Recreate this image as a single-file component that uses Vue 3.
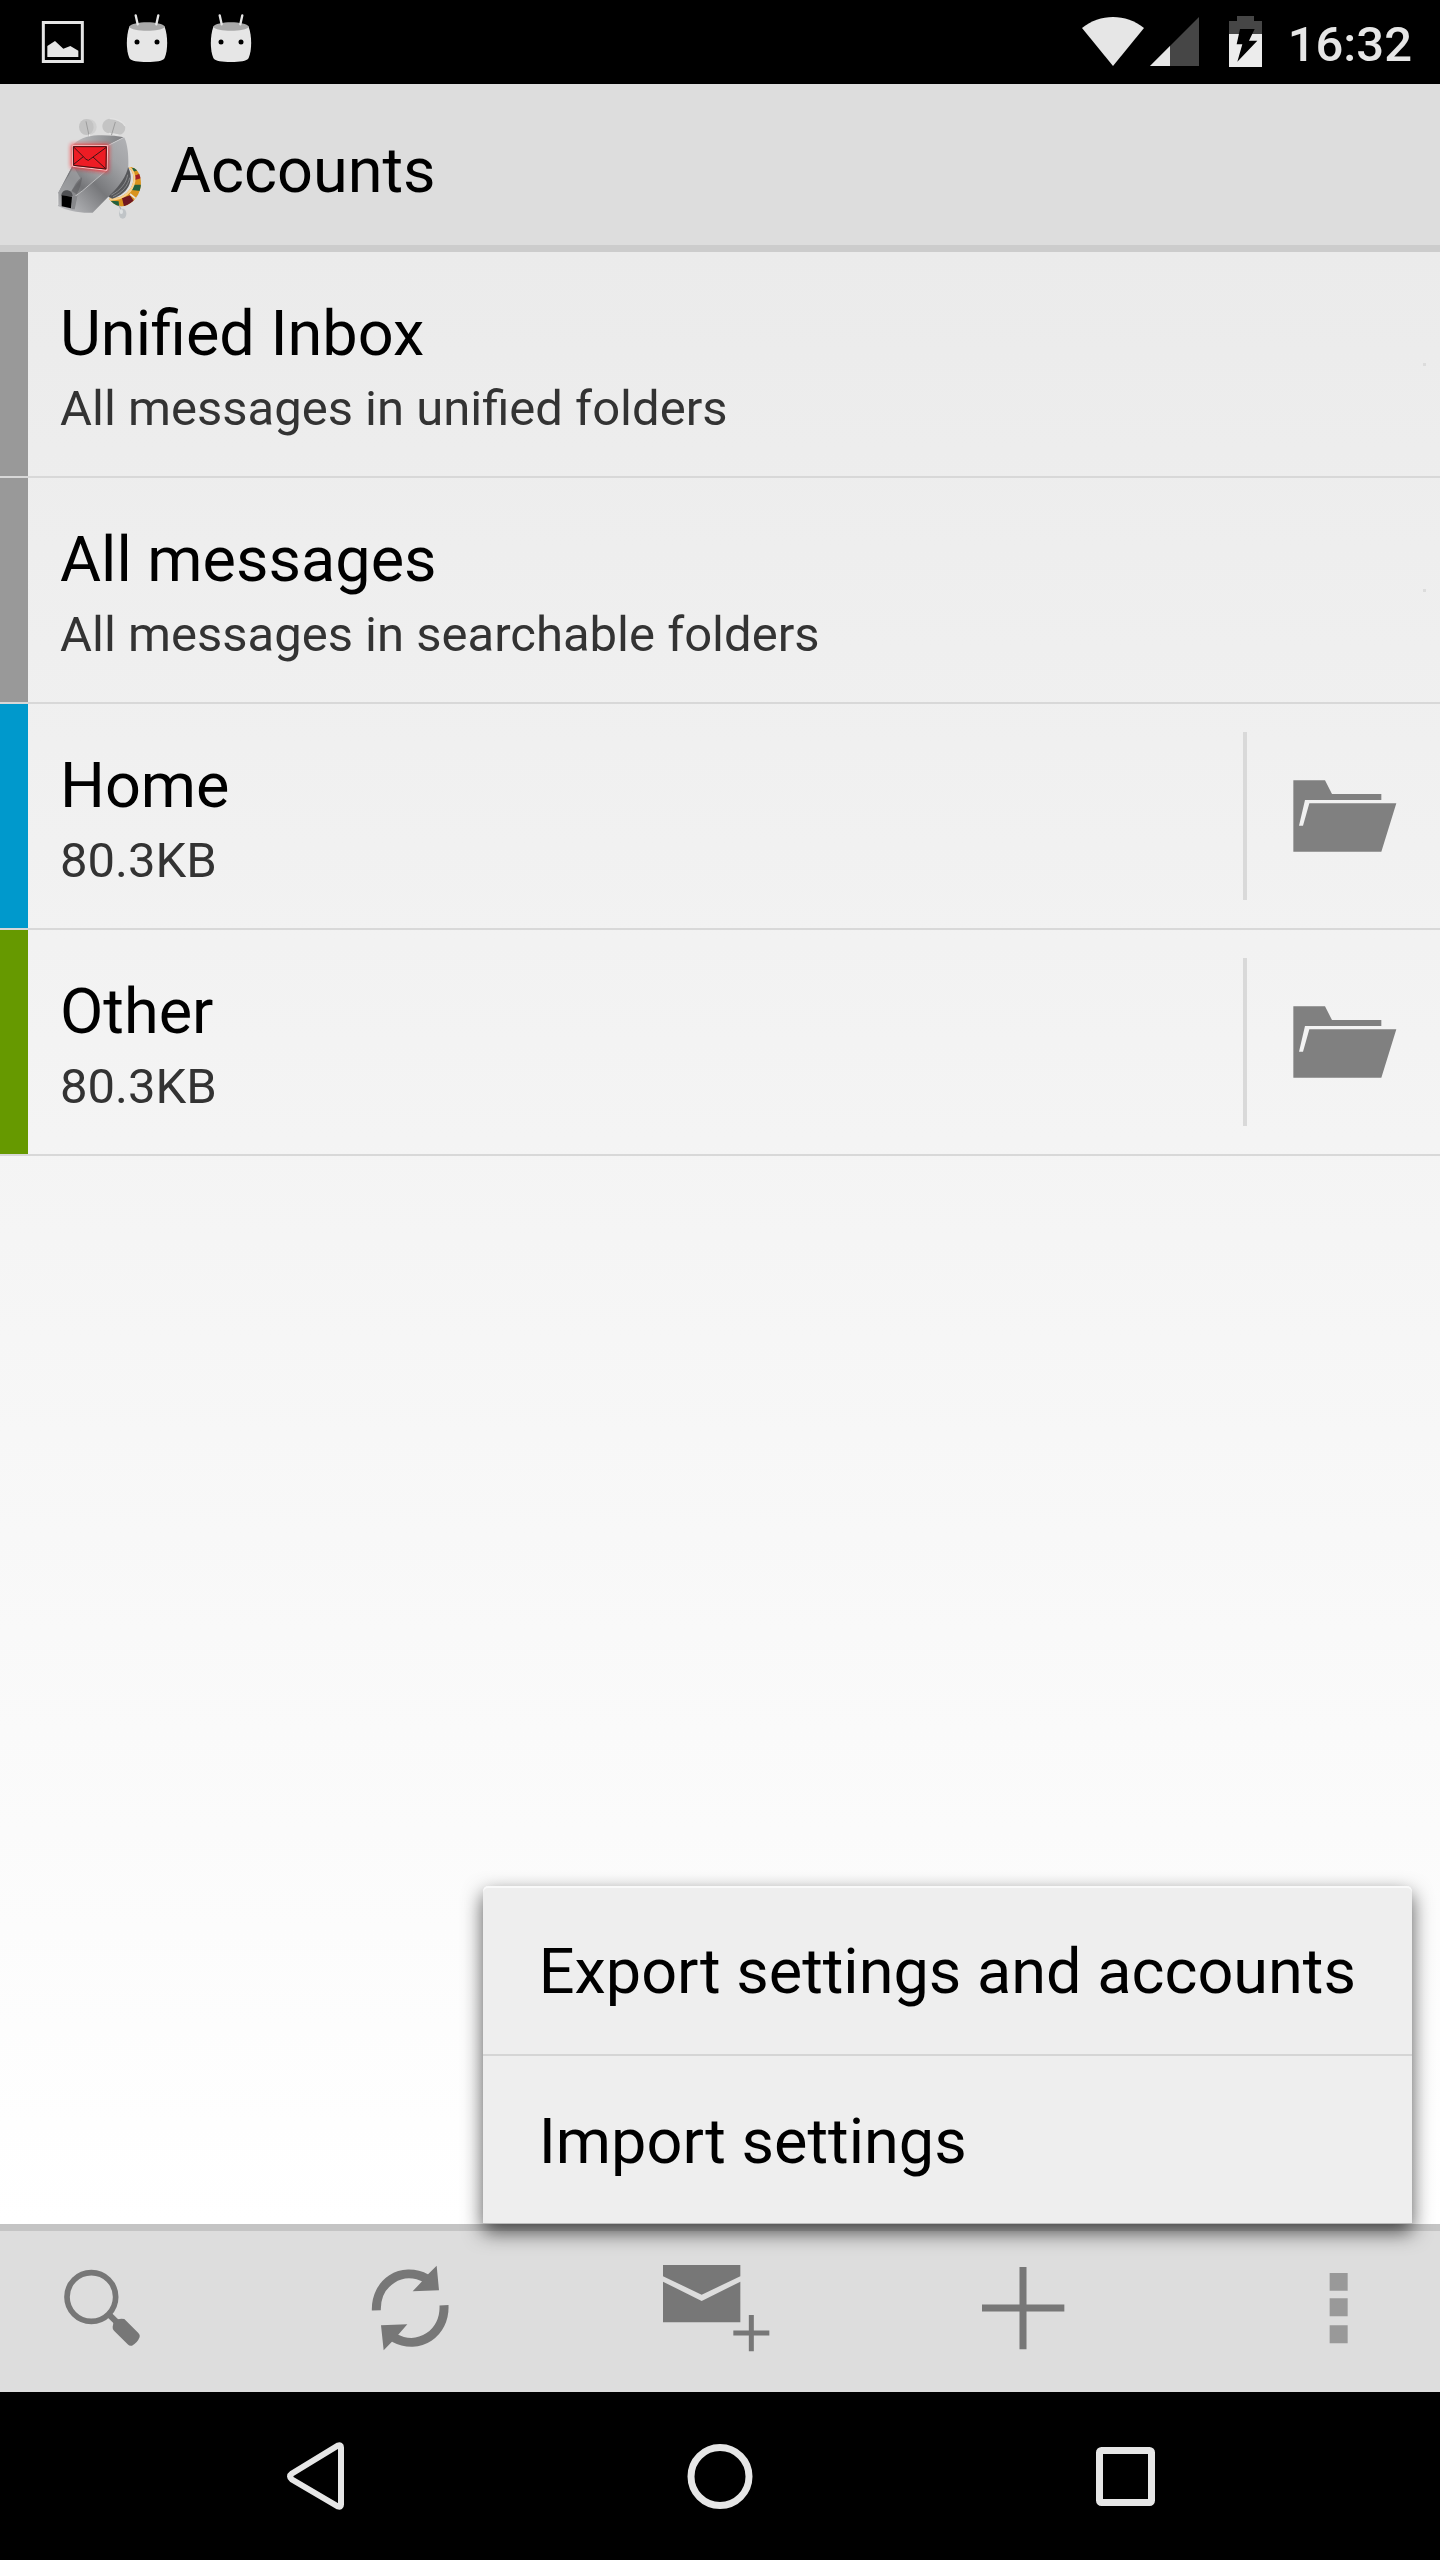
<script setup>
const accounts = [
  { name: 'Unified Inbox', detail: 'All messages in unified folders', tone: 'neutral', folders: false },
  { name: 'All messages', detail: 'All messages in searchable folders', tone: 'neutral', folders: false },
  { name: 'Home', detail: '80.3KB', tone: 'blue', folders: true },
  { name: 'Other', detail: '80.3KB', tone: 'green', folders: true },
]

const menuItems = ['Export settings and accounts', 'Import settings']
</script>

<template>
  <div class="screen">
    <div class="status">
      <div class="notifications">
        <svg class="notice" viewBox="63 0 252 252" aria-hidden="true">
          <rect x="130" y="67.5" width="117" height="117" fill="none" stroke="#e6e6e6" stroke-width="9" />
          <path d="M142 171V138L165 123L190 146L211 138L235 152V171Z" fill="#e6e6e6" />
        </svg>
        <svg v-for="n in 2" :key="n" class="notice" viewBox="315 0 252 252" aria-hidden="true">
          <path d="M388 80C378 108 378 150 388 174C394 184 414 186 441 186C468 186 488 184 494 174C504 150 504 108 494 80Z" fill="#e6e6e6" />
          <path d="M387 80C397 62 485 62 495 80C485 96 397 96 387 80Z" fill="#a9a9a9" />
          <path d="M407 46L413 73M475 46L469 73" stroke="#e6e6e6" stroke-width="7" stroke-linecap="round" />
          <circle cx="411" cy="126" r="7.5" fill="#000" />
          <circle cx="471" cy="126" r="7.5" fill="#000" />
        </svg>
      </div>
      <svg class="wifi" viewBox="66 0 186 252" aria-hidden="true">
        <path d="M66 84C120 40 198 40 252 84L159 198Z" fill="#e6e6e6" />
      </svg>
      <svg class="signal" viewBox="270 0 147 252" aria-hidden="true">
        <path d="M417 51V198H270Z" fill="#464646" />
        <path d="M330 138V198H270Z" fill="#e6e6e6" />
      </svg>
      <svg class="battery" viewBox="507 0 99 252" aria-hidden="true">
        <path d="M507 63H531V48H582V63H606V102H507Z" fill="#464646" />
        <path d="M507 102H606V201H507Z" fill="#ececec" />
        <path d="M540 87H584L567 122H592L532 185L547 133H530Z" fill="#000" />
      </svg>
      <time class="clock">16:32</time>
    </div>

    <header class="header">
      <svg class="logo" viewBox="12 43 336 336" aria-hidden="true">
        <defs>
          <linearGradient id="dogSide" x1="0" y1="1" x2="1" y2="0">
            <stop offset="0" stop-color="#c4c5c8" />
            <stop offset="0.2" stop-color="#a3a4a7" />
            <stop offset="0.45" stop-color="#77787b" />
            <stop offset="0.75" stop-color="#a2a3a6" />
            <stop offset="1" stop-color="#b2b3b6" />
          </linearGradient>
          <linearGradient id="dogSnout" x1="0" y1="1" x2="1" y2="0">
            <stop offset="0" stop-color="#b7b8ba" />
            <stop offset="0.5" stop-color="#737477" />
            <stop offset="1" stop-color="#b4b5b8" />
          </linearGradient>
          <linearGradient id="dogTop" x1="0" y1="0" x2="1" y2="0">
            <stop offset="0" stop-color="#c0c1c3" />
            <stop offset="1" stop-color="#7d7e81" />
          </linearGradient>
          <filter id="redGlow" x="-30%" y="-40%" width="160%" height="180%">
            <feGaussianBlur stdDeviation="7" />
          </filter>
          <clipPath id="collar">
            <path d="M268 198C294 200 306 226 302 258C297 292 266 320 240 317C226 314 214 305 207 294L222 292C250 292 276 268 280 240C282 222 276 208 266 202Z" />
          </clipPath>
        </defs>
        <g clip-path="url(#collar)">
          <path d="M200 190H310V325H200Z" fill="#d9931c" />
          <path d="M282 226L302 218L305 232L284 238Z" fill="#a21e24" />
          <path d="M274 204L288 198L296 208L280 213Z" fill="#23613f" />
          <path d="M280 252H306L302 271L274 268Z" fill="#23613f" />
          <path d="M246 292L270 284L282 302L252 318Z" fill="#701720" />
          <path d="M212 300L236 302L238 322L214 316Z" fill="#23613f" />
          <path d="M270 280L290 296" stroke="#e9e5d8" stroke-width="5" />
          <path d="M266 200C278 208 284 222 282 242C278 270 252 297 208 296" fill="none" stroke="#f8d08c" stroke-width="8" />
        </g>
        <path d="M264 198C282 232 272 276 217 294L205 288L250 190Z" fill="#56575a" />
        <path d="M269 231C264 256 246 276 219 288M263 222C259 248 241 269 214 283" fill="none" stroke="#a2a3a5" stroke-width="2" />
        <path d="M237 315L246 331" stroke="#aeb2b4" stroke-width="4" />
        <ellipse cx="248" cy="339" rx="11" ry="15" fill="#c0c4c7" />
        <ellipse cx="244" cy="333" rx="5" ry="7" fill="#dfe2e3" />
        <ellipse cx="148" cy="79" rx="22" ry="23" fill="#d0d0d0" />
        <ellipse cx="139" cy="79" rx="22" ry="24" fill="#c3c3c3" />
        <path d="M205 55C217 51 249 61 255 76C259 92 246 105 234 101L204 97C184 93 179 63 205 55Z" fill="#c4c4c4" />
        <path d="M209 54C225 53 250 63 255 76M207 98L235 103" fill="none" stroke="#e3e3e3" stroke-width="4" />
        <path d="M138 62L148 109M226 64L211 115" stroke="#9d9d9d" stroke-width="3" />
        <path d="M148 101L149 113M214 104L210 116" stroke="#f0f0f0" stroke-width="4" />
        <path d="M97 135C112 117 140 105 174 104C205 103 232 106 252 110L203 135Z" fill="url(#dogTop)" />
        <path d="M252 110C259 119 265 149 265 180V196C260 226 238 256 213 280L158 336C120 338 82 331 54 316L54 278L97 196L203 135Z" fill="url(#dogSide)" />
        <path d="M97 197L200 207L112 284L104 326L54 316V278Z" fill="url(#dogSnout)" />
        <path d="M101 198L123 236L94 271L66 282L54 278Z" fill="#a1a2a5" opacity="0.7" />
        <path d="M126 230C125 246 120 264 110 281L95 271C102 257 112 238 126 230Z" fill="#5d5e61" opacity="0.6" />
        <path d="M203 135L252 110M104 288L128 270L202 207" fill="none" stroke="#d9dadb" stroke-width="2" />
        <path d="M64 285C64 263 98 263 98 287Z" fill="#505154" />
        <path d="M65 284L96 288L93 323L65 317Z" fill="#000" />
        <path d="M98 286L112 286L104 326H94Z" fill="#87888b" />
        <path d="M54 278V313" stroke="#ededed" stroke-width="2" />
        <path d="M97 135H203L201 210L97 197Z" fill="#ff1a24" stroke="#ff1a24" stroke-width="8" opacity="0.85" filter="url(#redGlow)" />
        <path d="M98 135H203L201 209L98 197Z" fill="#ed1c24" stroke="#f7c9ca" stroke-width="3" />
        <path d="M100 138H199L198 205L101 194ZM101 139L138 176L145 179L151 175L199 140M101 191L130 168M159 169L197 204" fill="none" stroke="#3f1415" stroke-width="3" />
      </svg>
      <h1 class="title">Accounts</h1>
    </header>

    <main class="content">
      <ul class="accounts">
        <li v-for="account in accounts" :key="account.name" class="row">
          <span class="chip" :class="account.tone"></span>
          <button type="button" class="account">
            <span class="name">{{ account.name }}</span>
            <span class="detail">{{ account.detail }}</span>
          </button>
          <button v-if="account.folders" type="button" class="folders" :aria-label="`Folders of ${account.name}`">
            <svg viewBox="264 288 336 240" aria-hidden="true">
              <path d="M280 301H375L396 342H544V360H315L297 437H309L328 370H589L544 515H280Z" fill="#808080" />
            </svg>
          </button>
          <span v-else class="dot"></span>
        </li>
      </ul>
    </main>

    <footer class="toolbar">
      <button type="button" class="tool" aria-label="Search">
        <svg viewBox="138 156 336 336" aria-hidden="true">
          <circle cx="274" cy="291" r="73" fill="none" stroke="#777" stroke-width="17" />
          <path d="M325 342L352 368" stroke="#777" stroke-width="18" />
          <path d="M340 370Q337 366 344 361Q358 354 373 357L415 399Q421 405 419 411Q412 429 396 437Q389 439 383 433L342 392Q337 387 338 380Z" fill="#777" />
        </svg>
      </button>
      <button type="button" class="tool" aria-label="Refresh">
        <svg viewBox="1059 156 336 336" aria-hidden="true">
          <path d="M1129 331C1127 248 1204 196 1280 236M1332 316C1336 399 1258 453 1182 413" fill="none" stroke="#777" stroke-width="27" />
          <path d="M1310 197L1317 271L1238 274L1267 243L1282 225ZM1151 451L1143 376L1222 373L1194 405L1178 423Z" fill="#777" />
        </svg>
      </button>
      <button type="button" class="tool" aria-label="Compose">
        <svg viewBox="120 156 336 336" aria-hidden="true">
          <path d="M129 195H361V229L245 284L129 229ZM129 245L245 303L361 245V367H129Z" fill="#777" />
          <path d="M340 399H448M394 345V454" stroke="#777" stroke-width="15" />
        </svg>
      </button>
      <button type="button" class="tool" aria-label="Add account">
        <svg viewBox="1041 156 336 336" aria-hidden="true">
          <path d="M1086 324H1333M1209 201V448" stroke="#777" stroke-width="21" />
        </svg>
      </button>
      <button type="button" class="tool more" aria-label="More options" aria-haspopup="menu" aria-expanded="true">
        <svg viewBox="6 156 336 336" aria-hidden="true">
          <path d="M149 219H203V272H149ZM149 295H203V349H149ZM149 376H203V430H149Z" fill="#999" />
        </svg>
      </button>

      <div class="menu" role="menu">
        <button v-for="item in menuItems" :key="item" type="button" class="menu-item" role="menuitem">{{ item }}</button>
      </div>
    </footer>

    <nav class="navbar" aria-label="System">
      <button type="button" class="key" aria-label="Back">
        <svg viewBox="0 0 80 80" aria-hidden="true">
          <path d="M17 37.5L63 9.5Q66 8.500 66 11.500V68.500Q66 71.500 63 70.500L17 43.500Q13 40.500 17 37.500Z" fill="none" stroke="#e6e6e6" stroke-width="6" />
        </svg>
      </button>
      <button type="button" class="key" aria-label="Home">
        <svg viewBox="0 0 80 80" aria-hidden="true">
          <circle cx="40" cy="40.5" r="29" fill="none" stroke="#e6e6e6" stroke-width="7" />
        </svg>
      </button>
      <button type="button" class="key" aria-label="Overview">
        <svg viewBox="0 0 80 80" aria-hidden="true">
          <rect x="14.5" y="14.5" width="52" height="52" rx="2" fill="none" stroke="#e6e6e6" stroke-width="7" />
        </svg>
      </button>
    </nav>
  </div>
</template>

<style>
body {
  margin: 0;
  background: #000;
}
</style>

<style scoped>
.screen {
  display: flex;
  flex-direction: column;
  min-height: 100vh;
  font-family: Roboto, "Noto Sans", sans-serif;
  color: #000;
}

button {
  margin: 0;
  padding: 0;
  border: 0;
  background: none;
  font: inherit;
  color: inherit;
  text-align: left;
}

svg {
  display: block;
  flex: none;
}

.status {
  display: flex;
  align-items: center;
  height: 84px;
  padding: 0 28px 0 21px;
  background: #000;
}

.notifications {
  display: flex;
  flex: 1;
}

.notice {
  width: 84px;
  height: 84px;
}

.wifi {
  width: 62px;
  height: 84px;
  margin-right: 6px;
}

.signal {
  width: 49px;
  height: 84px;
  margin-right: 30px;
}

.battery {
  width: 33px;
  height: 84px;
  margin-right: 26px;
}

.clock {
  padding-top: 5px;
  font-size: 49px;
  font-weight: 500;
  line-height: 58px;
  color: #e6e6e6;
}

.header {
  display: flex;
  align-items: center;
  gap: 14px;
  box-sizing: border-box;
  height: 168px;
  padding: 12px 44px 0;
  border-bottom: 7px solid #ccc;
  background: #ddd;
}

.logo {
  width: 112px;
  height: 112px;
}

.title {
  margin: 0;
  font-size: 63px;
  font-weight: 400;
  line-height: 74px;
}

.content {
  flex: 1;
  background: linear-gradient(#ebebeb, #fff);
}

.accounts {
  margin: 0;
  padding: 0;
  list-style: none;
}

.row {
  display: flex;
  align-items: center;
  border-bottom: 2px solid #d8d8d8;
}

.chip {
  align-self: stretch;
  flex: none;
  width: 28px;
}

.neutral {
  background: #999;
}

.blue {
  background: #09c;
}

.green {
  background: #690;
}

.account {
  display: flex;
  flex: 1;
  flex-direction: column;
  padding: 42px 32px 32px;
}

.name {
  font-size: 63px;
  line-height: 80px;
}

.detail {
  font-size: 49px;
  line-height: 70px;
  color: #333;
}

.folders {
  display: flex;
  align-items: center;
  height: 168px;
  padding: 0 40px 0 41px;
  border-left: 4px solid #d9d9d9;
}

.folders svg {
  width: 112px;
  height: 80px;
}

.dot {
  width: 3px;
  height: 3px;
  margin-right: 14px;
  background: #dcdcdc;
}

.toolbar {
  position: relative;
  display: flex;
  gap: 103px;
  height: 168px;
  background: #ddd;
  box-shadow: inset 0 7px #c4c4c4;
}

.tool {
  display: flex;
  align-items: center;
  justify-content: center;
  width: 204px;
}

.tool svg {
  width: 112px;
  height: 112px;
}

.more {
  margin-left: auto;
}

.menu {
  position: absolute;
  right: 28px;
  bottom: 100%;
  display: flex;
  flex-direction: column;
  border-radius: 5px 5px 0 0;
  background: #eee;
  box-shadow: inset 0 2px #f9f9f9, inset 0 -1px #bbb, 0 8px 20px rgba(0, 0, 0, 0.68);
}

.menu-item {
  padding: 4px 56px 0;
  font-size: 63px;
  line-height: 164px;
  white-space: nowrap;
}

.menu-item + .menu-item {
  border-top: 2px solid #d5d5d5;
}

.navbar {
  display: flex;
  justify-content: space-between;
  height: 168px;
  padding: 0 175px;
  background: #000;
}

.key {
  display: flex;
  align-items: center;
  justify-content: center;
  width: 280px;
}

.key svg {
  width: 80px;
  height: 80px;
}
</style>
